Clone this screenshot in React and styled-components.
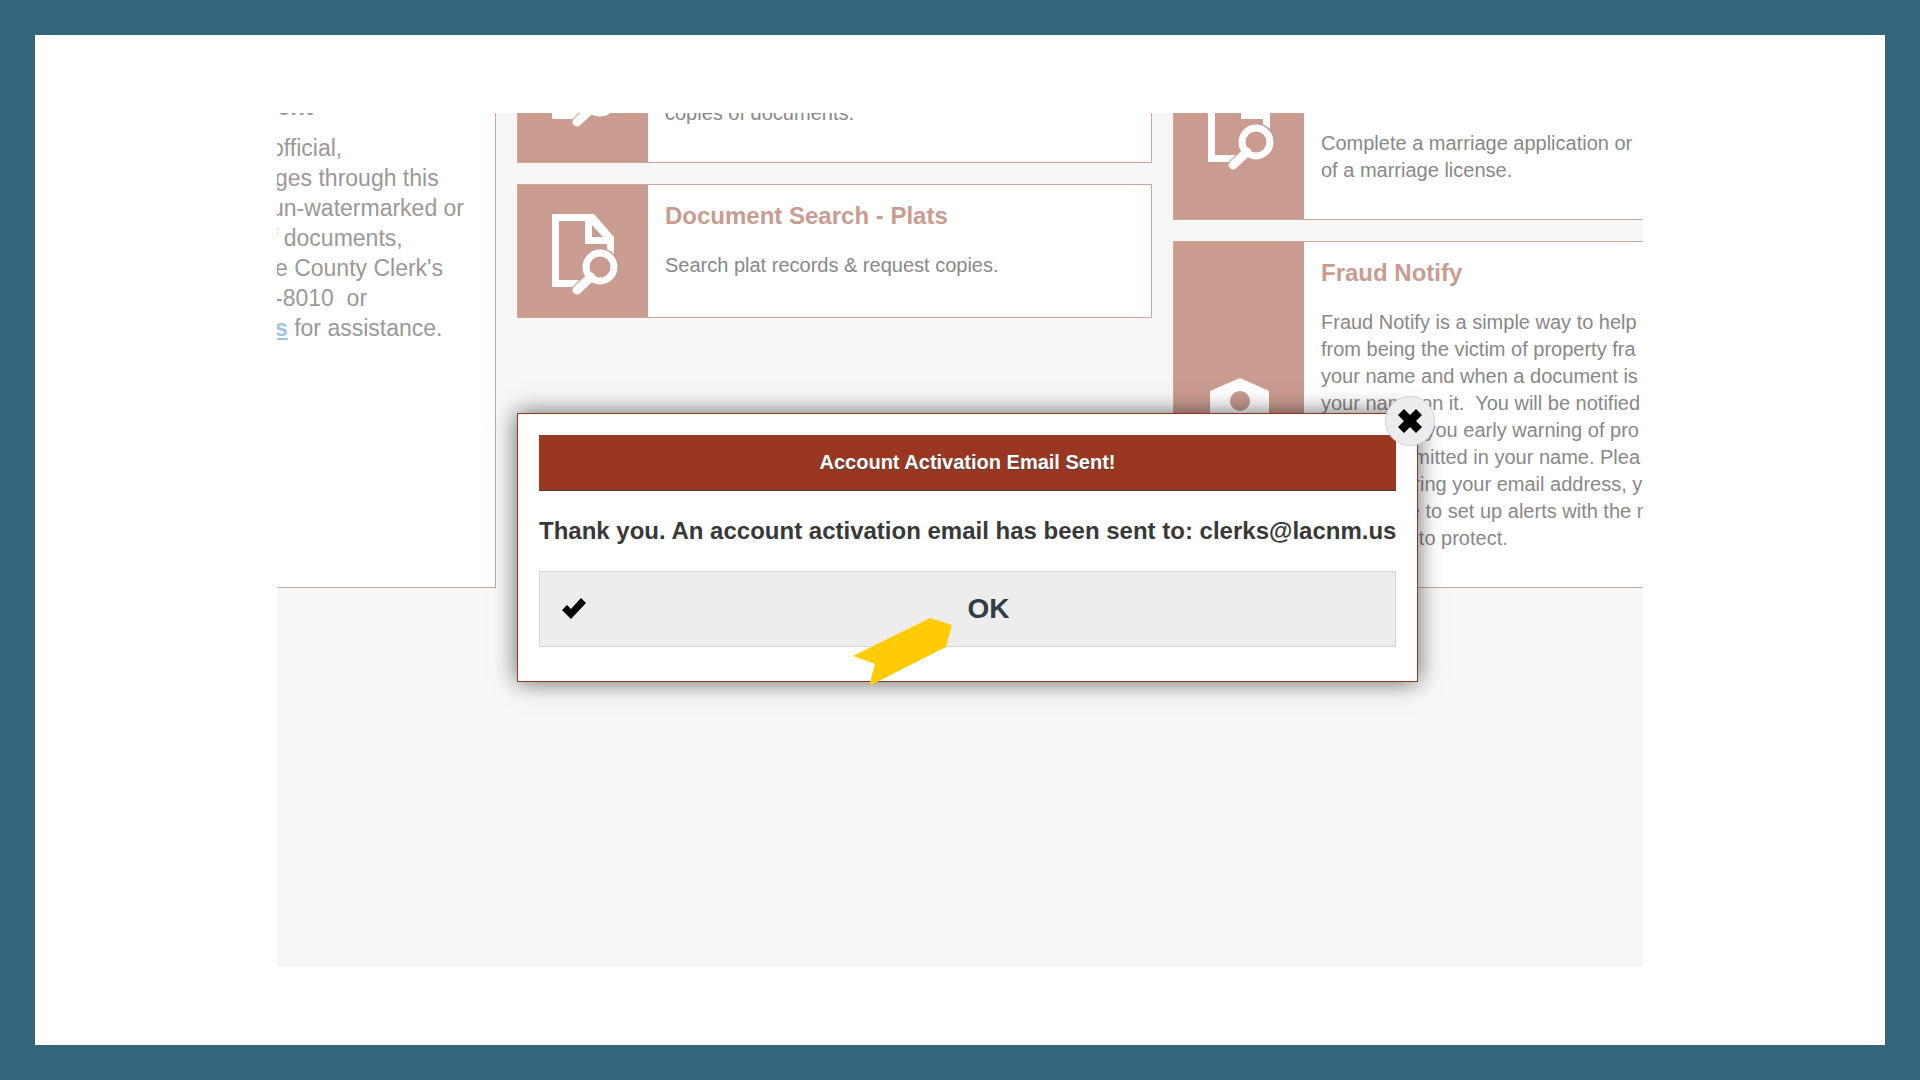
import React from "react";
import styled, { createGlobalStyle } from "styled-components";

const GlobalStyle = createGlobalStyle`
  * { box-sizing: border-box; }
  body { margin: 0; }
`;

const Slide = styled.div`
  min-height: 100vh;
  display: flex;
  border: 35px solid #35647d;
  background: #fff;
  padding: 78px 242px;
  font-family: "Liberation Sans", Arial, sans-serif;
`;

const Viewport = styled.div`
  position: relative;
  flex: 1;
  min-width: 0;
  overflow: hidden;
  background: #f7f7f7;
`;

const Page = styled.main`
  display: grid;
  grid-template-columns: 219px minmax(0, 1fr) 470px;
  gap: 21px;
  align-items: start;
  margin-top: -110px;
`;

const Column = styled.div`
  display: flex;
  flex-direction: column;
  gap: 21px;
  padding-top: ${(p) => p.$top || 0}px;
`;

const Notice = styled.section`
  height: 585px;
  background: #fff;
  border: 1px solid #d0a59a;
  border-left: 0;
  color: #999;
  font-size: 23px;
  line-height: 30px;
  white-space: pre;
  padding-top: 88px;
`;

const NoticeHead = styled.h2`
  margin: 0 0 11px;
  font-size: 24px;
  line-height: 30px;
`;

const NoticeLine = styled.div`
  margin-left: ${(p) => (p.$cut ? -6 : -2)}px;
`;

const NoticeLink = styled.a`
  color: #9cc3e0;
  font-weight: bold;
`;

const CardBox = styled.article`
  display: flex;
  min-height: ${(p) => p.$height}px;
  background: #fff;
  border: 1px solid #d0a59a;
  ${(p) => p.$open && "border-right: 0;"}
`;

const CardIcon = styled.div`
  flex: 0 0 130px;
  display: flex;
  align-items: center;
  justify-content: center;
  padding-top: 6px;
  background: #ca9b8f;
`;

const CardBody = styled.div`
  flex: 1;
  min-width: 0;
  display: flex;
  flex-direction: column;
  justify-content: ${(p) => (p.$bottom ? "flex-end" : "flex-start")};
  padding: 16px 0 35px 17px;
  overflow: hidden;
`;

const CardTitle = styled.h2`
  margin: 0 0 22px;
  font-size: 24px;
  line-height: 29px;
  color: #ca9b8f;
`;

const CardText = styled.p`
  margin: 0;
  font-size: 20px;
  line-height: 27px;
  color: #888;
  white-space: pre;
`;

const Dialog = styled.section`
  position: absolute;
  top: 300px;
  left: 240px;
  right: 225px;
  padding: 21px 21px 34px;
  background: #fff;
  border: 1px solid #98371f;
  box-shadow: 0 0 22px rgba(0, 0, 0, 0.6);
`;

const DialogTitle = styled.h1`
  margin: 0;
  padding: 13px 0;
  background: #9a3720;
  border-bottom: 1px solid #4a3a3c;
  color: #fff;
  font-size: 20px;
  line-height: 29px;
  text-align: center;
  text-shadow: 0 1px 1px #444;
`;

const Message = styled.p`
  margin: 24px 0;
  color: #383838;
  font-size: 24px;
  font-weight: bold;
  line-height: 32px;
  text-align: center;
  white-space: nowrap;
`;

const OkButton = styled.button`
  display: flex;
  align-items: center;
  width: 100%;
  height: 76px;
  padding: 0 21px;
  border: 1px solid #d5d5d5;
  background: #ededed;
  color: #2f3e46;
  font-family: inherit;
  font-size: 28px;
  font-weight: bold;
`;

const OkLabel = styled.span`
  flex: 1;
  text-align: center;
  padding-left: 16px;
`;

const CloseButton = styled.button`
  position: absolute;
  top: -18px;
  right: -18px;
  width: 50px;
  height: 50px;
  display: grid;
  place-items: center;
  padding: 0;
  border: 1px solid #d0d0d0;
  border-radius: 50%;
  background: #ededed;
`;

const Pointer = styled.svg`
  position: absolute;
  top: 505px;
  left: 576px;
`;

function DocumentSearchIcon() {
  return (
    <svg width="72" height="84" viewBox="-4 0 72 84" aria-hidden="true">
      <path
        fillRule="evenodd"
        fill="#fff"
        d="M1 2h42l20 23v21h-7V32H34V9H8v59h21l-7 7H1zM41 13v12h11z"
      />
      <path d="M40 65L26 79" stroke="#ca9b8f" strokeWidth="12" />
      <circle cx="49" cy="55" r="19" fill="#ca9b8f" />
      <circle cx="49" cy="55" r="14" fill="none" stroke="#fff" strokeWidth="7" />
      <path d="M40 65L26 78" stroke="#fff" strokeWidth="9" strokeLinecap="round" />
    </svg>
  );
}

function BadgeIcon() {
  return (
    <svg width="62" height="80" viewBox="-2 0 62 80" aria-hidden="true">
      <path fill="#fff" d="M0 13L30 0l29 13v36c0 14-13 25-29 31C14 74 0 63 0 49z" />
      <circle cx="30" cy="23" r="10" fill="#ca9b8f" />
      <path d="M13 54c0-24 34-24 34 0z" fill="#ca9b8f" />
    </svg>
  );
}

function Card({ icon, title, lines, height, bottom, open }) {
  return (
    <CardBox $height={height} $open={open}>
      <CardIcon>{icon}</CardIcon>
      <CardBody $bottom={bottom}>
        {title && <CardTitle>{title}</CardTitle>}
        <CardText>{lines.join("\n")}</CardText>
      </CardBody>
    </CardBox>
  );
}

const fraudLines = [
  "Fraud Notify is a simple way to help",
  "from being the victim of property fra",
  "your name and when a document is",
  "your name on it.  You will be notified",
  "will provide you early warning of pro",
  "being committed in your name. Plea",
  "Upon entering your email address, y",
  "will be able to set up alerts with the n",
  "you intend to protect.",
];

export default function App() {
  return (
    <>
      <GlobalStyle />
      <Slide>
        <Viewport>
          <Page>
            <Notice>
              <NoticeHead>ent</NoticeHead>
              <NoticeLine $cut>official,</NoticeLine>
              <NoticeLine>ges through this</NoticeLine>
              <NoticeLine $cut>un-watermarked or</NoticeLine>
              <NoticeLine $cut>f documents,</NoticeLine>
              <NoticeLine>e County Clerk's</NoticeLine>
              <NoticeLine>-8010  or</NoticeLine>
              <NoticeLine>
                <NoticeLink href="#contact">s</NoticeLink> for assistance.
              </NoticeLine>
            </Notice>
            <Column>
              <Card icon={<DocumentSearchIcon />} height={160} bottom lines={["copies of documents."]} />
              <Card
                icon={<DocumentSearchIcon />}
                height={134}
                title="Document Search - Plats"
                lines={["Search plat records & request copies."]}
              />
            </Column>
            <Column $top={29}>
              <Card
                icon={<DocumentSearchIcon />}
                height={188}
                bottom
                open
                lines={["Complete a marriage application or", "of a marriage license."]}
              />
              <Card icon={<BadgeIcon />} height={347} open title="Fraud Notify" lines={fraudLines} />
            </Column>
          </Page>
          <Dialog role="dialog" aria-labelledby="dialog-title">
            <DialogTitle id="dialog-title">Account Activation Email Sent!</DialogTitle>
            <Message>Thank you. An account activation email has been sent to: clerks@lacnm.us</Message>
            <OkButton type="button">
              <svg width="26" height="24" viewBox="0 0 26 24" aria-hidden="true">
                <path d="M1 13l5-5 4 4L20 1l5 5L10 22z" />
              </svg>
              <OkLabel>OK</OkLabel>
            </OkButton>
            <CloseButton type="button" aria-label="Close">
              <svg width="26" height="26" viewBox="0 0 26 26" aria-hidden="true">
                <path d="M7 1l6 6 6-6 6 6-6 6 6 6-6 6-6-6-6 6-6-6 6-6-6-6z" />
              </svg>
            </CloseButton>
          </Dialog>
          <Pointer width="100" height="69" viewBox="0 0 100 69" aria-hidden="true">
            <path fill="#ffcc05" d="M77 0l22 7-6 22-77 39 6-22-22-8z" />
          </Pointer>
        </Viewport>
      </Slide>
    </>
  );
}
